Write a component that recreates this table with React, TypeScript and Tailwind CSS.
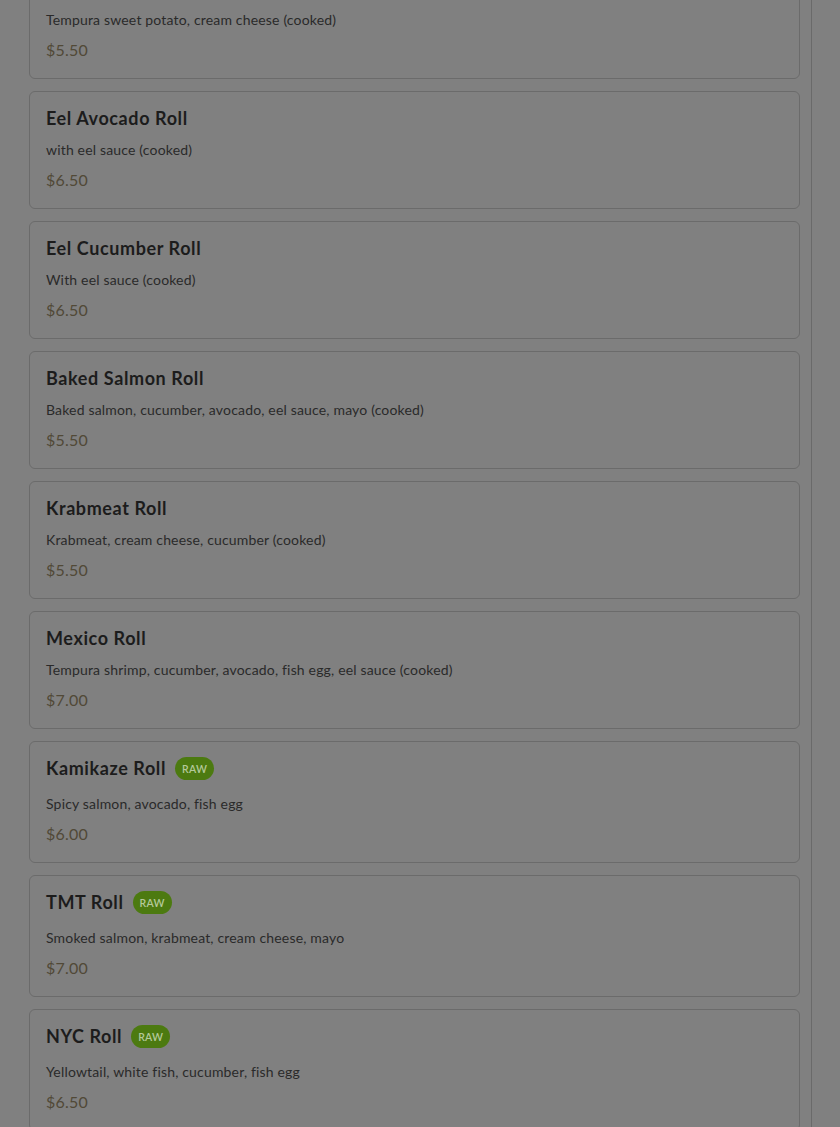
import React from "react";

type Item = { name: string; desc: string; price: string; raw?: boolean };

const items: Item[] = [
  { name: "Sweet Potato Roll", desc: "Tempura sweet potato, cream cheese (cooked)", price: "$5.50" },
  { name: "Eel Avocado Roll", desc: "with eel sauce (cooked)", price: "$6.50" },
  { name: "Eel Cucumber Roll", desc: "With eel sauce (cooked)", price: "$6.50" },
  { name: "Baked Salmon Roll", desc: "Baked salmon, cucumber, avocado, eel sauce, mayo (cooked)", price: "$5.50" },
  { name: "Krabmeat Roll", desc: "Krabmeat, cream cheese, cucumber (cooked)", price: "$5.50" },
  { name: "Mexico Roll", desc: "Tempura shrimp, cucumber, avocado, fish egg, eel sauce (cooked)", price: "$7.00" },
  { name: "Kamikaze Roll", desc: "Spicy salmon, avocado, fish egg", price: "$6.00", raw: true },
  { name: "TMT Roll", desc: "Smoked salmon, krabmeat, cream cheese, mayo", price: "$7.00", raw: true },
  { name: "NYC Roll", desc: "Yellowtail, white fish, cucumber, fish egg", price: "$6.50", raw: true },
];

function Card({ item }: { item: Item }) {
  return (
    <div className="rounded-md border border-[#6b6b6b] bg-[#808080] px-4 pt-[14px] pb-4">
      <div className="flex items-center gap-[9px]">
        <h3 className="text-[18px] leading-6 font-bold tracking-[0.6px] text-[#1c1c1c]">{item.name}</h3>
        {item.raw && (
          <span className="inline-flex h-[23px] items-center rounded-full bg-[#4c7a10] px-[7px] pt-[2px] text-[10.5px] leading-none font-semibold tracking-[0.3px] text-[#b4c99a]">
            RAW
          </span>
        )}
      </div>
      <p className={`${item.raw ? "mt-[14px]" : "mt-[10px]"} text-[14px] leading-5 tracking-[0.17px] text-[#2a2a2a]`}>
        {item.desc}
      </p>
      <p className="mt-2 text-[16px] leading-6 tracking-[0.2px] text-[#514937]">{item.price}</p>
    </div>
  );
}

export default function App() {
  return (
    <div
      className="flex h-[1127px] w-full overflow-hidden bg-[#808080]"
      style={{ fontFamily: "Lato, 'Noto Sans', sans-serif" }}
    >
      <div className="w-[812px] shrink-0 border-r border-[#6a6a6a] pl-[29px] pr-[11px]">
        <div className="-mt-[39px] flex flex-col gap-3">
          {items.map((it) => (
            <Card key={it.name} item={it} />
          ))}
        </div>
      </div>
      <div className="flex-1 bg-[#808080]" />
    </div>
  );
}
